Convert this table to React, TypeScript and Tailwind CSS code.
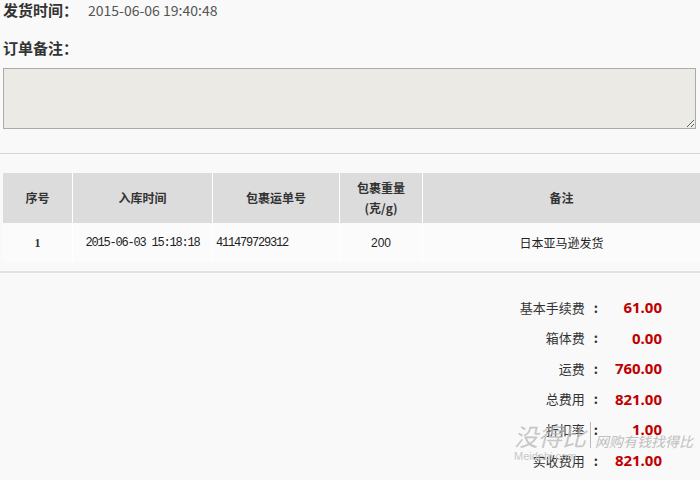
import React from "react";

const cjk = { fontFamily: '"Noto Sans CJK SC", "Noto Sans", sans-serif' };
const mono = { fontFamily: '"Liberation Mono", "Noto Sans CJK SC", monospace' };

const fees: [string, string][] = [
  ["基本手续费", "61.00"],
  ["箱体费", "0.00"],
  ["运费", "760.00"],
  ["总费用", "821.00"],
  ["折扣率", "1.00"],
  ["实收费用", "821.00"],
];

export default function App() {
  return (
    <div className="relative w-[700px] h-[480px] overflow-hidden bg-[#f9f9f9]" style={cjk}>
      <div className="pl-[3px] h-[20px] flex items-center">
        <span className="text-[15px] font-bold text-[#333] w-[85px]">发货时间：</span>
        <span className="text-[14px] text-[#555]">2015-06-06 19:40:48</span>
      </div>
      <div className="pl-[3px] mt-[18px] h-[20px] flex items-center">
        <span className="text-[15px] font-bold text-[#333]">订单备注：</span>
      </div>
      <div className="mt-[10px] ml-[3px] mr-[4px]">
        <textarea className="block w-full h-[61px] border border-[#aaaaaa] bg-[#ebeae4] outline-none" />
      </div>
      <div className="mt-[24px] h-px bg-[#d6d6d6]" />
      <div className="mt-[19px] ml-[3px] bg-white grid grid-cols-[69px_139px_126px_82px_1fr] gap-x-px text-[#333]">
        <div className="h-[50px] bg-[#dcdcdc] flex items-center justify-center text-[12px] font-bold">序号</div>
        <div className="h-[50px] bg-[#dcdcdc] flex items-center justify-center text-[12px] font-bold">入库时间</div>
        <div className="h-[50px] bg-[#dcdcdc] flex items-center justify-center text-[12px] font-bold">包裹运单号</div>
        <div className="h-[50px] bg-[#dcdcdc] flex flex-col items-center justify-center text-[12px] font-bold leading-[20px]">
          <span>包裹重量</span>
          <span>(克/g)</span>
        </div>
        <div className="h-[50px] bg-[#dcdcdc] flex items-center justify-center text-[12px] font-bold">备注</div>
        <div className="h-[39px] bg-[#fbfbfb] flex items-center justify-center text-[12px] font-bold" style={{ fontFamily: '"Liberation Serif", serif' }}>1</div>
        <div className="h-[39px] bg-[#fbfbfb] flex items-center justify-center text-[12px] tracking-[-1.2px] text-[#222]" style={mono}>2015-06-03 15:18:18</div>
        <div className="h-[39px] bg-[#fbfbfb] flex items-center pl-[3px] text-[12px] tracking-[-1.2px] text-[#222]" style={mono}>411479729312</div>
        <div className="h-[39px] bg-[#fbfbfb] flex items-center justify-center text-[12px] text-[#222]" style={{ fontFamily: '"Liberation Sans", sans-serif' }}>200</div>
        <div className="h-[39px] bg-[#fbfbfb] flex items-center justify-center text-[12px] text-[#222]">日本亚马逊发货</div>
      </div>
      <div className="mt-[9px] h-[2px] bg-[#e2e2e2]" />
      <div className="mt-[19px] pr-[38px] flex flex-col items-end">
        {fees.map(([l, v]) => (
          <div key={l} className="h-[30.6px] flex items-center">
            <span className="text-[13px] text-[#333]">{l}</span>
            <span className="pl-[9px] text-[13px] text-[#333] font-bold">:</span>
            <span className="w-[64px] text-right text-[15px] font-bold text-[#c00000]" style={{ fontFamily: '"Noto Sans", sans-serif' }}>{v}</span>
          </div>
        ))}
      </div>
      <div className="absolute left-[514px] top-[422px] pointer-events-none select-none">
        <div className="flex items-end">
          <span className="text-[24px] text-[#bbbbbb] opacity-80 leading-none italic" style={{ fontFamily: '"Noto Sans CJK SC", serif' }}>没得比</span>
          <span className="ml-[4px] w-px h-[26px] bg-[#bbbbbb]" />
          <span className="ml-[4px] text-[14px] text-[#c0c0c0] leading-none italic">网购有钱找得比</span>
        </div>
        <div className="text-[11px] text-[#c8c8c8] leading-none mt-[3px]" style={{ fontFamily: '"Liberation Sans", sans-serif' }}>Meidebi.com</div>
      </div>
    </div>
  );
}
